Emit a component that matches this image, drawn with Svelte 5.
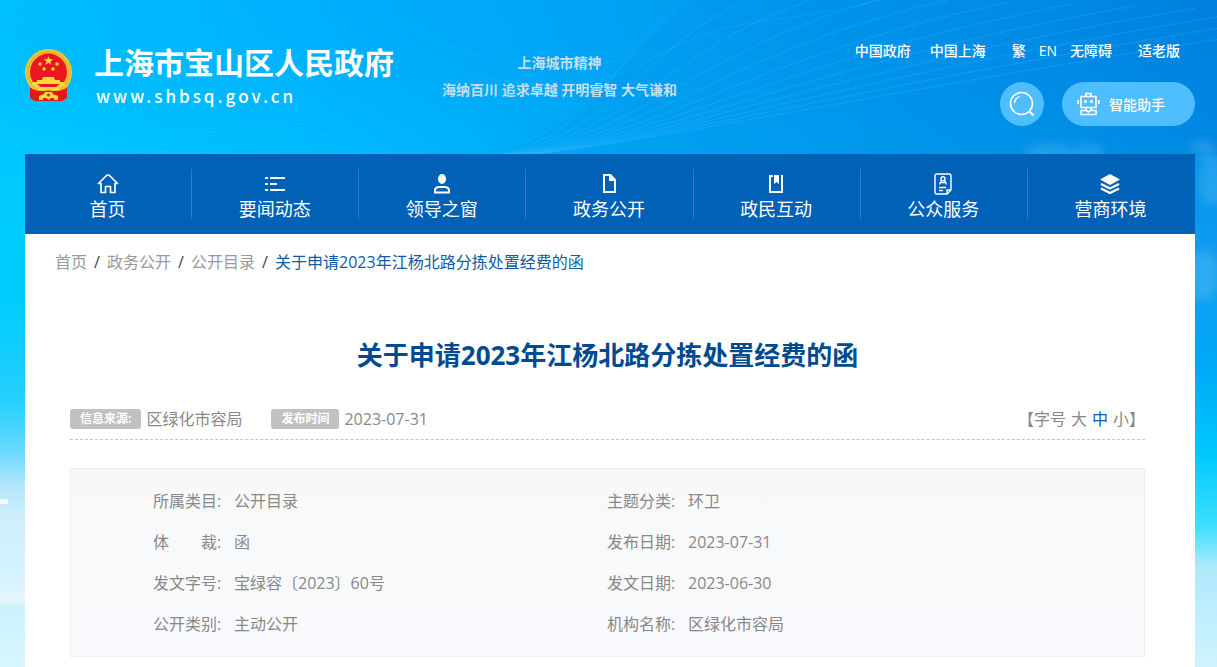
<script>
  const links = ['中国政府', '中国上海', '繁', 'EN', '无障碍', '适老版'];

  const menu = [
    { name: '首页', icon: 'home' },
    { name: '要闻动态', icon: 'list' },
    { name: '领导之窗', icon: 'person' },
    { name: '政务公开', icon: 'file' },
    { name: '政民互动', icon: 'book' },
    { name: '公众服务', icon: 'service' },
    { name: '营商环境', icon: 'layers' }
  ];

  const crumbs = ['首页', '政务公开', '公开目录'];
  const title = '关于申请2023年江杨北路分拣处置经费的函';

  const info = [
    ['所属类目:', '公开目录'],
    ['主题分类:', '环卫'],
    ['体\u3000\u3000裁:', '函'],
    ['发布日期:', '2023-07-31'],
    ['发文字号:', '宝绿容〔2023〕60号'],
    ['发文日期:', '2023-06-30'],
    ['公开类别:', '主动公开'],
    ['机构名称:', '区绿化市容局']
  ];

  const sizes = ['大', '中', '小'];
  let size = $state('中');

  // light curves in the header background
  const fan = Array.from({ length: 12 }, (_, i) => i);
</script>

<svg class="sky" viewBox="0 0 1217 667" preserveAspectRatio="none" aria-hidden="true">
  <defs>
    <linearGradient id="left" x1="0" y1="0" x2="0" y2="1">
      <stop offset="0" stop-color="#00bbff" />
      <stop offset="0.2" stop-color="#00c8ff" />
      <stop offset="0.45" stop-color="#00ccff" />
      <stop offset="0.6" stop-color="#24cffd" />
      <stop offset="0.68" stop-color="#6edafd" />
      <stop offset="0.73" stop-color="#b5e6fb" />
      <stop offset="0.78" stop-color="#d0effd" />
      <stop offset="0.86" stop-color="#d4f2fe" />
      <stop offset="0.9" stop-color="#e5f6fd" />
      <stop offset="0.91" stop-color="#cdf2fc" />
      <stop offset="1" stop-color="#d6f6fe" />
    </linearGradient>
    <linearGradient id="right" x1="0" y1="0" x2="0" y2="1">
      <stop offset="0" stop-color="#0080de" />
      <stop offset="0.25" stop-color="#0093ea" />
      <stop offset="0.4" stop-color="#129df0" />
      <stop offset="0.55" stop-color="#00a8f4" />
      <stop offset="0.68" stop-color="#00c8fe" />
      <stop offset="0.79" stop-color="#3de0ff" />
      <stop offset="0.85" stop-color="#aeeafc" />
      <stop offset="1" stop-color="#d0f3fe" />
    </linearGradient>
    <linearGradient id="top">
      <stop offset="0" stop-color="#00bfff" />
      <stop offset="0.25" stop-color="#00b0fd" />
      <stop offset="0.55" stop-color="#009ff2" />
      <stop offset="0.8" stop-color="#008ee8" />
      <stop offset="1" stop-color="#0080de" />
    </linearGradient>
    <linearGradient id="glow" x1="0" y1="0" x2="0" y2="1">
      <stop offset="0" stop-color="#00b8ff" stop-opacity="0" />
      <stop offset="1" stop-color="#00ccff" stop-opacity="0.7" />
    </linearGradient>
    <linearGradient id="fade">
      <stop offset="0" stop-color="#fff" />
      <stop offset="0.5" stop-color="#333" />
      <stop offset="1" stop-color="#333" />
    </linearGradient>
    <mask id="west"><rect width="1217" height="160" fill="url(#fade)" /></mask>
    <filter id="soft" x="-50%" y="-50%" width="200%" height="200%">
      <feGaussianBlur stdDeviation="5" />
    </filter>
  </defs>
  <rect width="600" height="667" fill="url(#left)" />
  <rect x="600" width="617" height="667" fill="url(#right)" />
  <rect width="1217" height="156" fill="url(#top)" />
  <rect width="1217" height="156" fill="url(#glow)" mask="url(#west)" />
  <path d="M480 156C590 140 630 40 700 0H1217V156Z" fill="#0088e4" opacity="0.15" />
  <g fill="none" stroke="#5cc8ff" stroke-width="1">
    {#each fan as i}
      <path
        d="M{480 + i * 4} 156C{600 + i * 12} {150 - i * 2} {620 + i * 26} {30 + i * 5} {700 + i * 62} {-8 + i * 2}"
        opacity="0.22"
      />
    {/each}
    <path d="M130 156C260 110 320 115 400 154M190 156C300 118 350 135 380 156" opacity="0.15" />
    <path d="M350 0C420 80 560 110 650 60S760 30 880 0M370 0C440 60 570 90 660 45" opacity="0.15" />
  </g>
  <g fill="#fff" opacity="0.13" filter="url(#soft)">
    <ellipse cx="1050" cy="153" rx="25" ry="10" />
    <ellipse cx="1088" cy="152" rx="16" ry="9" />
    <ellipse cx="1203" cy="148" rx="13" ry="8" />
    <ellipse cx="1212" cy="180" rx="14" ry="26" />
    <ellipse cx="1204" cy="275" rx="14" ry="26" />
  </g>
  <rect y="499" width="8" height="5" fill="#fff" opacity="0.8" />
</svg>

<div class="page">
  <header>
    <a class="logo" href="/">
      <svg class="emblem" viewBox="0 0 47 52" aria-hidden="true">
        <path d="M5 34L5 49L10 52H37L42 49V34Z" fill="#e01b17" />
        <circle cx="23.500" cy="23.500" r="23.500" fill="#f0c535" />
        <circle cx="23.500" cy="23.500" r="20.500" fill="none" stroke="#dba72a" stroke-width="1" />
        <circle cx="23.500" cy="23" r="18.500" fill="#ea1620" />
        <path d="M23.500 7l1.200 3.300h3.500l-2.800 2.100 1.100 3.400-3-2.100-3 2.100 1.100-3.400-2.800-2.100h3.500z" fill="#ffd83b" />
        <g fill="#ffd83b">
          <circle cx="15" cy="15" r="1.700" />
          <circle cx="32" cy="15" r="1.700" />
          <circle cx="19" cy="20" r="1.700" />
          <circle cx="28" cy="20" r="1.700" />
          <path d="M18 28h11l1 3h5v3H12v-3h5z" />
          <path d="M8 33h31l1 3-7 5H14l-7-5z" />
        </g>
        <path d="M12 35h23l-4 3H16z" fill="#ea1620" />
        <path d="M5 39l8 3h21l8-3-1 10-4 3H10l-4-3z" fill="#e01b17" />
        <path d="M14 47l5-2 1-2h7l1 2 5 2v4h-4v-2h-3l-2 2-3-2h-3v2h-4z" fill="#ffd83b" />
        <circle cx="23.500" cy="46" r="1.500" fill="#e01b17" />
      </svg>
      <span class="names">
        <strong>上海市宝山区人民政府</strong>
        <span class="domain">www.shbsq.gov.cn</span>
      </span>
    </a>
    <p class="slogan">上海城市精神<br />海纳百川 追求卓越 开明睿智 大气谦和</p>
    <div class="tools">
      <div class="links">
        {#each links as link}
          <a href="/">{link}</a>
        {/each}
      </div>
      <div class="actions">
        <button class="search" aria-label="搜索">
          <svg width="26" height="26" viewBox="0 0 26 26" fill="none" stroke="#fff" aria-hidden="true">
            <circle cx="12.500" cy="12.500" r="11" stroke-width="1.600" />
            <path d="M5.500 12a7.500 7.500 0 0 1 5-6.500" stroke-width="1.300" />
            <path d="M20.500 20.500l4 4" stroke-width="2" />
          </svg>
        </button>
        <button class="helper">
          <svg width="24" height="24" viewBox="0 0 24 24" fill="none" stroke="#fff" stroke-width="1.600" aria-hidden="true">
            <path d="M9 4V1.500h5V4M4 4.500h15v11H4zM1.200 8v4M21.800 8v4M9 16v2.500M14 16v2.500M4 22.500v-4h5.500l2 1.500 2-1.500H19v4z" />
            <path d="M8.500 8v3M14.500 8v3" stroke-width="2.400" />
          </svg>
          智能助手
        </button>
      </div>
    </div>
  </header>

  <nav>
    {#each menu as item}
      <a href="/">
        <svg width="24" height="24" viewBox="0 0 24 24" fill="none" stroke="#fff" stroke-width="2" aria-hidden="true">
          {#if item.icon === 'home'}
            <path d="M2.500 11.500L10.500 3.500Q12 2.500 13.500 3.500L21.500 11.500H19V20.500H14.500V14.500H9.500V20.500H5V11.500Z" stroke-width="1.700" stroke-linejoin="round" />
          {:else if item.icon === 'list'}
            <path d="M2 6h3M7 6h15M2 12h3M7 12h7M2 18h3M7 18h15" />
          {:else if item.icon === 'person'}
            <ellipse cx="12" cy="7" rx="4" ry="5" fill="#fff" stroke="none" />
            <path d="M5 20.500v-2q0-3.500 4.500-3.500h5q4.500 0 4.500 3.500v2z" />
          {:else if item.icon === 'file'}
            <path d="M7 3h6.500l4.500 5v12H7z" />
            <path d="M12 3v6h6z" fill="#fff" stroke="none" />
          {:else if item.icon === 'book'}
            <path d="M9 4H6v16h12V4h-1" />
            <path d="M10 3h5v9l-2.500-2-2.500 2z" fill="#fff" stroke="none" />
          {:else if item.icon === 'service'}
            <path d="M16 22H6q-2 0-2-2V4q0-2 2-2h12q2 0 2 2v14zM16 22v-4h4M8.500 12.500l1.700-4M15.500 12.500l-1.700-4M10 10.500h4M8 15.500h7M8 18.500h4" stroke-width="1.400" />
            <circle cx="12" cy="6.800" r="2" stroke-width="1.400" />
          {:else}
            <path d="M12 2l10 5.500-10 5.500L2 7.500z" fill="#fff" stroke="none" />
            <path d="M3 12l9 4.500 9-4.500M3 16.500l9 4.500 9-4.500" stroke-width="2.400" />
          {/if}
        </svg>
        <span>{item.name}</span>
      </a>
    {/each}
  </nav>

  <main>
    <div class="crumbs">
      {#each crumbs as crumb}
        <a href="/">{crumb}</a><i>/</i>
      {/each}
      <span>{title}</span>
    </div>

    <article>
      <h1>{title}</h1>

      <div class="meta">
        <span class="tag">信息来源:</span>
        <span class="source">区绿化市容局</span>
        <span class="tag">发布时间</span>
        <time>2023-07-31</time>
        <div class="sizes">
          <span>【字号</span>
          {#each sizes as s}
            <button class:on={size === s} onclick={() => (size = s)}>{s}</button>
          {/each}
        </div>
        <span>】</span>
      </div>

      <dl>
        {#each info as [label, value]}
          <div>
            <dt>{label}</dt>
            <dd>{value}</dd>
          </div>
        {/each}
      </dl>
    </article>
  </main>
</div>

<style>
  :global(body) {
    background: #d3f5fe;
    font-family: 'Open Sans', 'Noto Sans CJK SC', sans-serif;
    font-size: 16px;
    color: #888;
  }

  a {
    color: inherit;
    text-decoration: none;
  }

  button {
    border: 0;
    padding: 0;
    background: none;
    font: inherit;
    color: inherit;
    cursor: pointer;
  }

  .sky {
    position: absolute;
    top: 0;
    left: 0;
    width: 100%;
    height: 667px;
    z-index: -1;
  }

  .page {
    padding: 0 22px 0 25px;
  }

  header {
    display: flex;
    align-items: flex-start;
    box-sizing: border-box;
    min-height: 154px;
    padding-top: 40px;
    color: #fff;
  }

  .logo {
    display: flex;
    gap: 22px;
  }

  .emblem {
    width: 47px;
    height: 52px;
    margin-top: 9px;
  }

  .names strong {
    display: block;
    font-size: 30px;
    line-height: 46px;
  }

  .domain {
    display: block;
    padding-left: 2px;
    font-family: 'Noto Sans CJK SC', sans-serif;
    font-size: 17px;
    font-weight: 500;
    line-height: 20px;
    letter-spacing: 3px;
  }

  .slogan {
    margin: 9px 0 0 48px;
    text-align: center;
    font-size: 14px;
    font-weight: bold;
    line-height: 27px;
    color: #c6dded;
  }

  .tools {
    margin-left: auto;
  }

  .links {
    display: flex;
    justify-content: flex-end;
    padding-right: 15px;
    font-size: 14px;
    font-weight: 500;
    line-height: 22px;
  }

  .links a {
    margin-left: 13px;
  }

  .links a:nth-child(2) {
    margin-left: 19px;
  }

  .links a:nth-child(3),
  .links a:nth-child(6) {
    margin-left: 26px;
  }

  .actions {
    display: flex;
    justify-content: flex-end;
    gap: 18px;
    margin-top: 20px;
  }

  .actions button {
    display: flex;
    align-items: center;
    height: 44px;
    border-radius: 22px;
    background: #4fbeff;
    color: #fff;
    font-size: 14px;
    font-weight: 500;
  }

  .search {
    width: 44px;
    justify-content: center;
  }

  .actions .helper {
    gap: 8px;
    padding: 0 30px 0 15px;
  }

  nav {
    display: grid;
    grid-template-columns: repeat(7, 1fr);
    height: 80px;
    background: #0061b7;
    color: #fff;
    font-size: 18px;
  }

  nav a {
    position: relative;
    display: flex;
    flex-direction: column;
    align-items: center;
    padding: 18px 2px 0 0;
  }

  nav a:not(:last-child)::after {
    content: '';
    position: absolute;
    right: 0;
    top: 15px;
    height: 50px;
    border-right: 1px solid #2381d2;
  }

  nav span {
    line-height: 26px;
  }

  main {
    min-height: 433px;
    background: #fff;
  }

  .crumbs {
    display: flex;
    padding: 16px 30px 0;
    line-height: 24px;
    color: #999;
  }

  .crumbs i {
    width: 20px;
    text-align: center;
    font-style: normal;
    color: #444;
  }

  .crumbs span {
    color: #0f5ba6;
  }

  article {
    padding: 0 50px 10px 45px;
  }

  h1 {
    margin: 60px 0 0;
    text-align: center;
    font-size: 26px;
    line-height: 42px;
    color: #004a8f;
  }

  .meta {
    display: flex;
    align-items: center;
    margin-top: 27px;
    padding-bottom: 4px;
    border-bottom: 1px dashed #c4c4c4;
    line-height: 32px;
  }

  .tag {
    margin-right: 5px;
    padding: 0 10px;
    border-radius: 3px;
    background: #c1c1c1;
    color: #fff;
    font-size: 12px;
    font-weight: bold;
    line-height: 20px;
  }

  .source {
    margin-right: 29px;
  }

  .sizes {
    display: flex;
    gap: 5px;
    margin-left: auto;
  }

  .sizes .on {
    color: #0f5ba6;
  }

  dl {
    display: grid;
    grid-template-columns: 1fr 1fr;
    margin: 28px 0 0;
    padding: 12px 83px 11px 82px;
    border: 1px solid #eee;
    background: linear-gradient(#f8f8f8, #f8fafd);
    line-height: 41px;
  }

  dl div {
    display: flex;
  }

  dt {
    width: 81px;
  }

  dd {
    margin: 0;
  }
</style>
